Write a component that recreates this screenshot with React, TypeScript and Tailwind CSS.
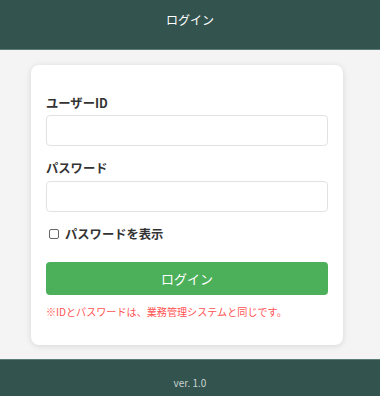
import * as React from "react";

export default function App() {
  const [show, setShow] = React.useState(false);
  return (
    <div
      className="w-[380px] h-[396px] flex flex-col bg-[#f4f4f4] overflow-hidden"
      style={{ fontFamily: '"Noto Sans CJK JP", "Noto Sans", sans-serif' }}
    >
      <header className="h-[50px] shrink-0 bg-[#33534f] border-b border-[#5b7b77] flex justify-center pt-[10px]">
        <h1 className="text-[12px] leading-[20px] text-white">ログイン</h1>
      </header>

      <main className="flex-1 pt-[15px] pl-[31px]">
        <div className="w-[312px] h-[280px] bg-white rounded-[8px] shadow-[0_1px_6px_rgba(0,0,0,0.12)] px-[15px] pt-[28px]">
          <label className="block text-[12.3px] leading-[20px] font-bold text-[#333] mb-[2px]">
            ユーザーID
          </label>
          <input
            type="text"
            className="block w-[282px] h-[31px] border border-[#e2e2e2] rounded-[4px] px-2 text-[13px] outline-none"
          />

          <label className="block text-[12.3px] leading-[20px] font-bold text-[#333] mt-[12px] mb-[3px]">
            パスワード
          </label>
          <input
            type={show ? "text" : "password"}
            className="block w-[282px] h-[31px] border border-[#e2e2e2] rounded-[4px] px-2 text-[13px] outline-none"
          />

          <label className="flex items-center mt-[12px] h-[20px] pl-[3px] cursor-pointer">
            <input
              type="checkbox"
              checked={show}
              onChange={(e) => setShow(e.target.checked)}
              className="appearance-none w-[10px] h-[10px] border border-[#666] rounded-[2px] bg-white"
            />
            <span className="ml-[6px] text-[12.3px] font-bold text-[#333]">
              パスワードを表示
            </span>
          </label>

          <button className="mt-[18px] w-[282px] h-[33px] rounded-[4px] bg-[#4caf5a] text-white text-[13px]">
            ログイン
          </button>

          <p className="mt-[9px] text-[10.1px] leading-[16px] text-[#ff5252]">
            ※IDとパスワードは、業務管理システムと同じです。
          </p>
        </div>
      </main>

      <footer className="h-[37px] shrink-0 bg-[#33534f] border-t border-[#5b7b77] flex justify-center pt-[15px]">
        <span className="text-[10px] leading-[16px] text-[#c9d3d1]">ver. 1.0</span>
      </footer>
    </div>
  );
}
